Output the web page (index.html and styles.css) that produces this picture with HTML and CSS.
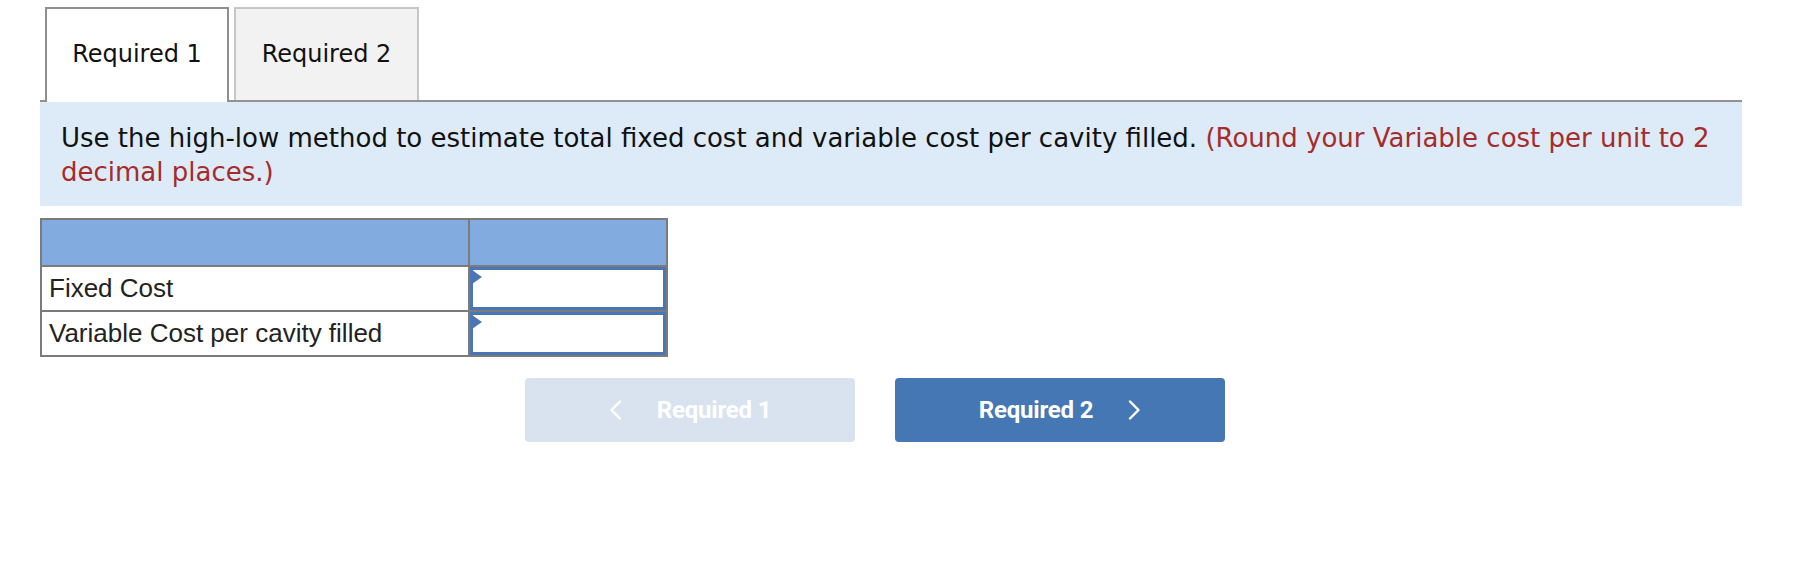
FILE: index.html
```html
<!DOCTYPE html>
<html lang="en">
<head>
<meta charset="utf-8">
<title>Required 1</title>
<link rel="stylesheet" href="styles.css">
</head>
<body>
<div class="page">
  <div class="tabs">
    <div class="tab tab-active">Required 1</div>
    <div class="tab tab-idle">Required 2</div>
  </div>
  <div class="prompt">Use the high-low method to estimate total fixed cost and variable cost per cavity filled. <span class="hint">(Round your Variable cost per unit to 2 decimal places.)</span></div>
  <table class="grid">
    <tr class="head-row"><td class="col-label"></td><td class="col-value"></td></tr>
    <tr class="body-row"><td class="label">Fixed Cost</td><td class="value"><div class="input"><span class="flag"></span></div></td></tr>
    <tr class="body-row"><td class="label">Variable Cost per cavity filled</td><td class="value"><div class="input"><span class="flag"></span></div></td></tr>
  </table>
  <div class="nav">
    <div class="btn btn-disabled">
      <svg class="chev" width="13" height="20" viewBox="0 0 13 20"><polyline points="11,1.5 2.5,10 11,18.5" fill="none" stroke="#fff" stroke-width="2.4" stroke-linecap="round" stroke-linejoin="round"/></svg>
      <span>Required 1</span>
    </div>
    <div class="btn btn-primary">
      <span>Required 2</span>
      <svg class="chev" width="13" height="20" viewBox="0 0 13 20"><polyline points="2,1.5 10.5,10 2,18.5" fill="none" stroke="#fff" stroke-width="2.4" stroke-linecap="round" stroke-linejoin="round"/></svg>
    </div>
  </div>
</div>
</body>
</html>
```
FILE: styles.css
```css
html, body {
  margin: 0;
  padding: 0;
  background: #ffffff;
}

.page {
  width: 1702px;
  padding: 7px 0 0 40px;
}

.tabs {
  display: flex;
  align-items: flex-start;
  gap: 5px;
  padding-left: 5px;
  height: 93px;
  border-bottom: 2px solid #929292;
}

.tab {
  box-sizing: border-box;
  height: 93px;
  border: 2px solid #8f8f8f;
  border-bottom: 0;
  padding-top: 30px;
  text-align: center;
  font-family: "DejaVu Sans", sans-serif;
  font-size: 24px;
  line-height: 30px;
  color: #111111;
}

.tab-active {
  width: 184px;
  height: 95px;
  background: #ffffff;
  position: relative;
}

.tab-idle {
  width: 185px;
  background: #f2f2f2;
  border-color: #c6c6c6;
}

.prompt {
  background: #ddebf8;
  padding: 19px 21px 17px;
  font-family: "DejaVu Sans", sans-serif;
  font-size: 26px;
  line-height: 34px;
  color: #111111;
}

.hint {
  color: #a62b2b;
}

.grid {
  margin-top: 12px;
  border-collapse: collapse;
  border: 2px solid #7b7b7b;
  width: 628px;
}

.grid td {
  border: 2px solid #7b7b7b;
  padding: 0;
}

.col-label {
  width: 426px;
}

.head-row td {
  height: 45px;
  background: #82acdf;
}

.body-row td {
  height: 43px;
}

.label {
  padding-left: 7px !important;
  font-family: "Liberation Sans", Arial, sans-serif;
  font-size: 26px;
  color: #222222;
  white-space: nowrap;
}

.input {
  position: relative;
  box-sizing: border-box;
  height: 43px;
  border: 3px solid #4a76b5;
}

.flag {
  position: absolute;
  left: -1px;
  top: 0;
  width: 0;
  height: 0;
  border-left: 10px solid #4a76b5;
  border-top: 7px solid transparent;
  border-bottom: 7px solid transparent;
}

.nav {
  display: flex;
  gap: 40px;
  margin-top: 21px;
  padding-left: 485px;
}

.btn {
  box-sizing: border-box;
  width: 330px;
  height: 64px;
  border-radius: 4px;
  display: flex;
  align-items: center;
  justify-content: center;
  gap: 35px;
  font-family: Roboto, "Liberation Sans", sans-serif;
  font-weight: 700;
  font-size: 24px;
  letter-spacing: -0.2px;
  color: #ffffff;
}

.btn-disabled {
  background: #d9e3ef;
}

.btn-primary {
  background: #4577b4;
}

.chev {
  display: block;
}
```
